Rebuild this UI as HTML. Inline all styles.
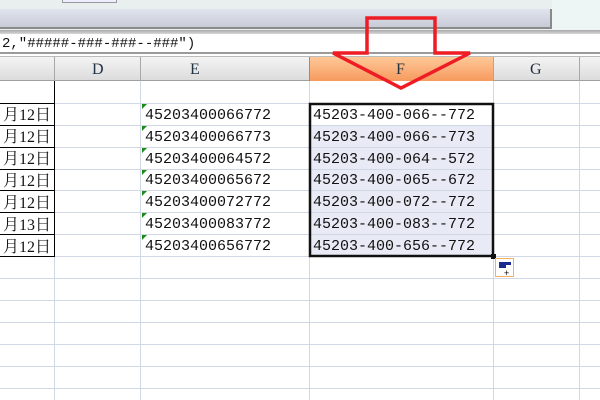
<!DOCTYPE html><html><head><style>
body{margin:0;width:600px;height:400px;overflow:hidden;background:#fff;position:relative;font-family:"Liberation Mono",monospace}
div{position:absolute;box-sizing:border-box}
.t{font-family:"Liberation Serif","Noto Serif CJK SC",serif;font-size:16px;color:#111;white-space:nowrap}
.n{font-family:"Liberation Mono",monospace;font-size:15px;color:#111;white-space:nowrap}
</style></head><body>
<div style="left:0;top:0;width:600px;height:30px;background:#e9eeee"></div>
<div style="left:552px;top:0;width:48px;height:30px;background:#eef5f5"></div>
<div style="left:0;top:9px;width:552px;height:20px;background:linear-gradient(#e0e4ee,#c9ccd6);border-right:2px solid #8a8a8a;border-bottom:2px solid #8a8a8a"></div>
<div style="left:62px;top:0;width:55px;height:3px;border:1px solid #999;border-top:none;background:#eef"></div>
<div style="left:0;top:30px;width:600px;height:4px;background:linear-gradient(#a8a8a8,#d8d8d8)"></div>
<div style="left:0;top:34px;width:600px;height:20px;background:#fff;border-bottom:2px solid #9a9a9a"></div>
<div class="n" style="left:2px;top:36px;font-size:14px">2,"#####-###-###--###")</div>
<div style="left:0;top:56px;width:600px;height:25px;background:linear-gradient(#f4f4f4,#dcdcdc);border-top:1px solid #bbb;border-bottom:1px solid #a0a0a0"></div>
<div style="left:309px;top:57px;width:185px;height:24px;background:linear-gradient(#fec898,#f79a5e)"></div>
<div style="left:54px;top:57px;width:1px;height:24px;background:#a8a8a8"></div>
<div style="left:140px;top:57px;width:1px;height:24px;background:#a8a8a8"></div>
<div style="left:309px;top:57px;width:1px;height:24px;background:#c08060"></div>
<div style="left:493px;top:57px;width:1px;height:24px;background:#a8a8a8"></div>
<div style="left:579px;top:57px;width:1px;height:24px;background:#a8a8a8"></div>
<div class="t" style="left:92px;top:61px;color:#234">D</div>
<div class="t" style="left:190px;top:61px;color:#234">E</div>
<div class="t" style="left:396px;top:61px;color:#234">F</div>
<div class="t" style="left:530px;top:61px;color:#234">G</div>
<!-- grid -->
<svg style="position:absolute;left:0;top:81px" width="600" height="319">
<g stroke="#d0d7e5" stroke-width="1">
<line x1="140.5" y1="0" x2="140.5" y2="319"/><line x1="309.5" y1="0" x2="309.5" y2="319"/><line x1="493.5" y1="0" x2="493.5" y2="319"/><line x1="579.5" y1="0" x2="579.5" y2="319"/><line x1="54.5" y1="0" x2="54.5" y2="319"/>
<line x1="0" y1="22.5" x2="600" y2="22.5"/><line x1="0" y1="44.5" x2="600" y2="44.5"/><line x1="0" y1="66.5" x2="600" y2="66.5"/><line x1="0" y1="88.5" x2="600" y2="88.5"/><line x1="0" y1="109.5" x2="600" y2="109.5"/><line x1="0" y1="131.5" x2="600" y2="131.5"/><line x1="0" y1="153.5" x2="600" y2="153.5"/><line x1="0" y1="175.5" x2="600" y2="175.5"/><line x1="0" y1="197.5" x2="600" y2="197.5"/><line x1="0" y1="219.5" x2="600" y2="219.5"/><line x1="0" y1="241.5" x2="600" y2="241.5"/><line x1="0" y1="263.5" x2="600" y2="263.5"/><line x1="0" y1="285.5" x2="600" y2="285.5"/><line x1="0" y1="307.5" x2="600" y2="307.5"/>
</g>
<rect x="311" y="45" width="181" height="130" fill="#e8ebf5"/>
<g stroke="#d0d7e5"><line x1="311" y1="66.5" x2="492" y2="66.5"/><line x1="311" y1="88.5" x2="492" y2="88.5"/><line x1="311" y1="109.5" x2="492" y2="109.5"/><line x1="311" y1="131.5" x2="492" y2="131.5"/><line x1="311" y1="153.5" x2="492" y2="153.5"/></g>
<g stroke="#000"><line x1="54.5" y1="0" x2="54.5" y2="175"/>
<line x1="0" y1="22.5" x2="55" y2="22.5"/><line x1="0" y1="44.5" x2="55" y2="44.5"/><line x1="0" y1="66.5" x2="55" y2="66.5"/><line x1="0" y1="88.5" x2="55" y2="88.5"/><line x1="0" y1="109.5" x2="55" y2="109.5"/><line x1="0" y1="131.5" x2="55" y2="131.5"/><line x1="0" y1="153.5" x2="55" y2="153.5"/><line x1="0" y1="175.5" x2="55" y2="175.5"/></g>
<rect x="310" y="23" width="183" height="152" fill="none" stroke="#111" stroke-width="2.5"/>
<rect x="491" y="173" width="5" height="5" fill="#111"/>
<g fill="#1a8a1a"><polygon points="142,23 147,23 142,28"/><polygon points="142,45 147,45 142,50"/><polygon points="142,67 147,67 142,72"/><polygon points="142,89 147,89 142,94"/><polygon points="142,110 147,110 142,115"/><polygon points="142,132 147,132 142,137"/><polygon points="142,154 147,154 142,159"/></g>
<rect x="495.5" y="177.5" width="18" height="18" fill="#fff" stroke="#f6b060"/>
<rect x="499" y="181" width="7" height="6" fill="#1a2a90"/><rect x="506" y="181" width="5" height="3" fill="#1a2a90"/>
<text x="504" y="195" font-size="9" fill="#000" font-family="Liberation Sans">+</text>
</svg>
<div class="t" style="left:0;top:105px;line-height:22px;width:51px;text-align:right;font-family:'Liberation Serif','Noto Serif CJK SC',serif">月12日<br>月12日<br>月12日<br>月12日<br>月12日<br>月13日<br>月12日</div>
<div class="n" style="left:145px;top:105px;line-height:21.8px">45203400066772<br>45203400066773<br>45203400064572<br>45203400065672<br>45203400072772<br>45203400083772<br>45203400656772</div>
<div class="n" style="left:313px;top:105px;line-height:21.8px">45203-400-066--772<br>45203-400-066--773<br>45203-400-064--572<br>45203-400-065--672<br>45203-400-072--772<br>45203-400-083--772<br>45203-400-656--772</div>
<svg style="position:absolute;left:0;top:0" width="600" height="400">
<polygon points="367,18 435,18 435,53 470,53 401,88 333,53 367,53" fill="none" stroke="#ee1c24" stroke-width="3.5" stroke-linejoin="miter"/>
</svg>
</body></html>
